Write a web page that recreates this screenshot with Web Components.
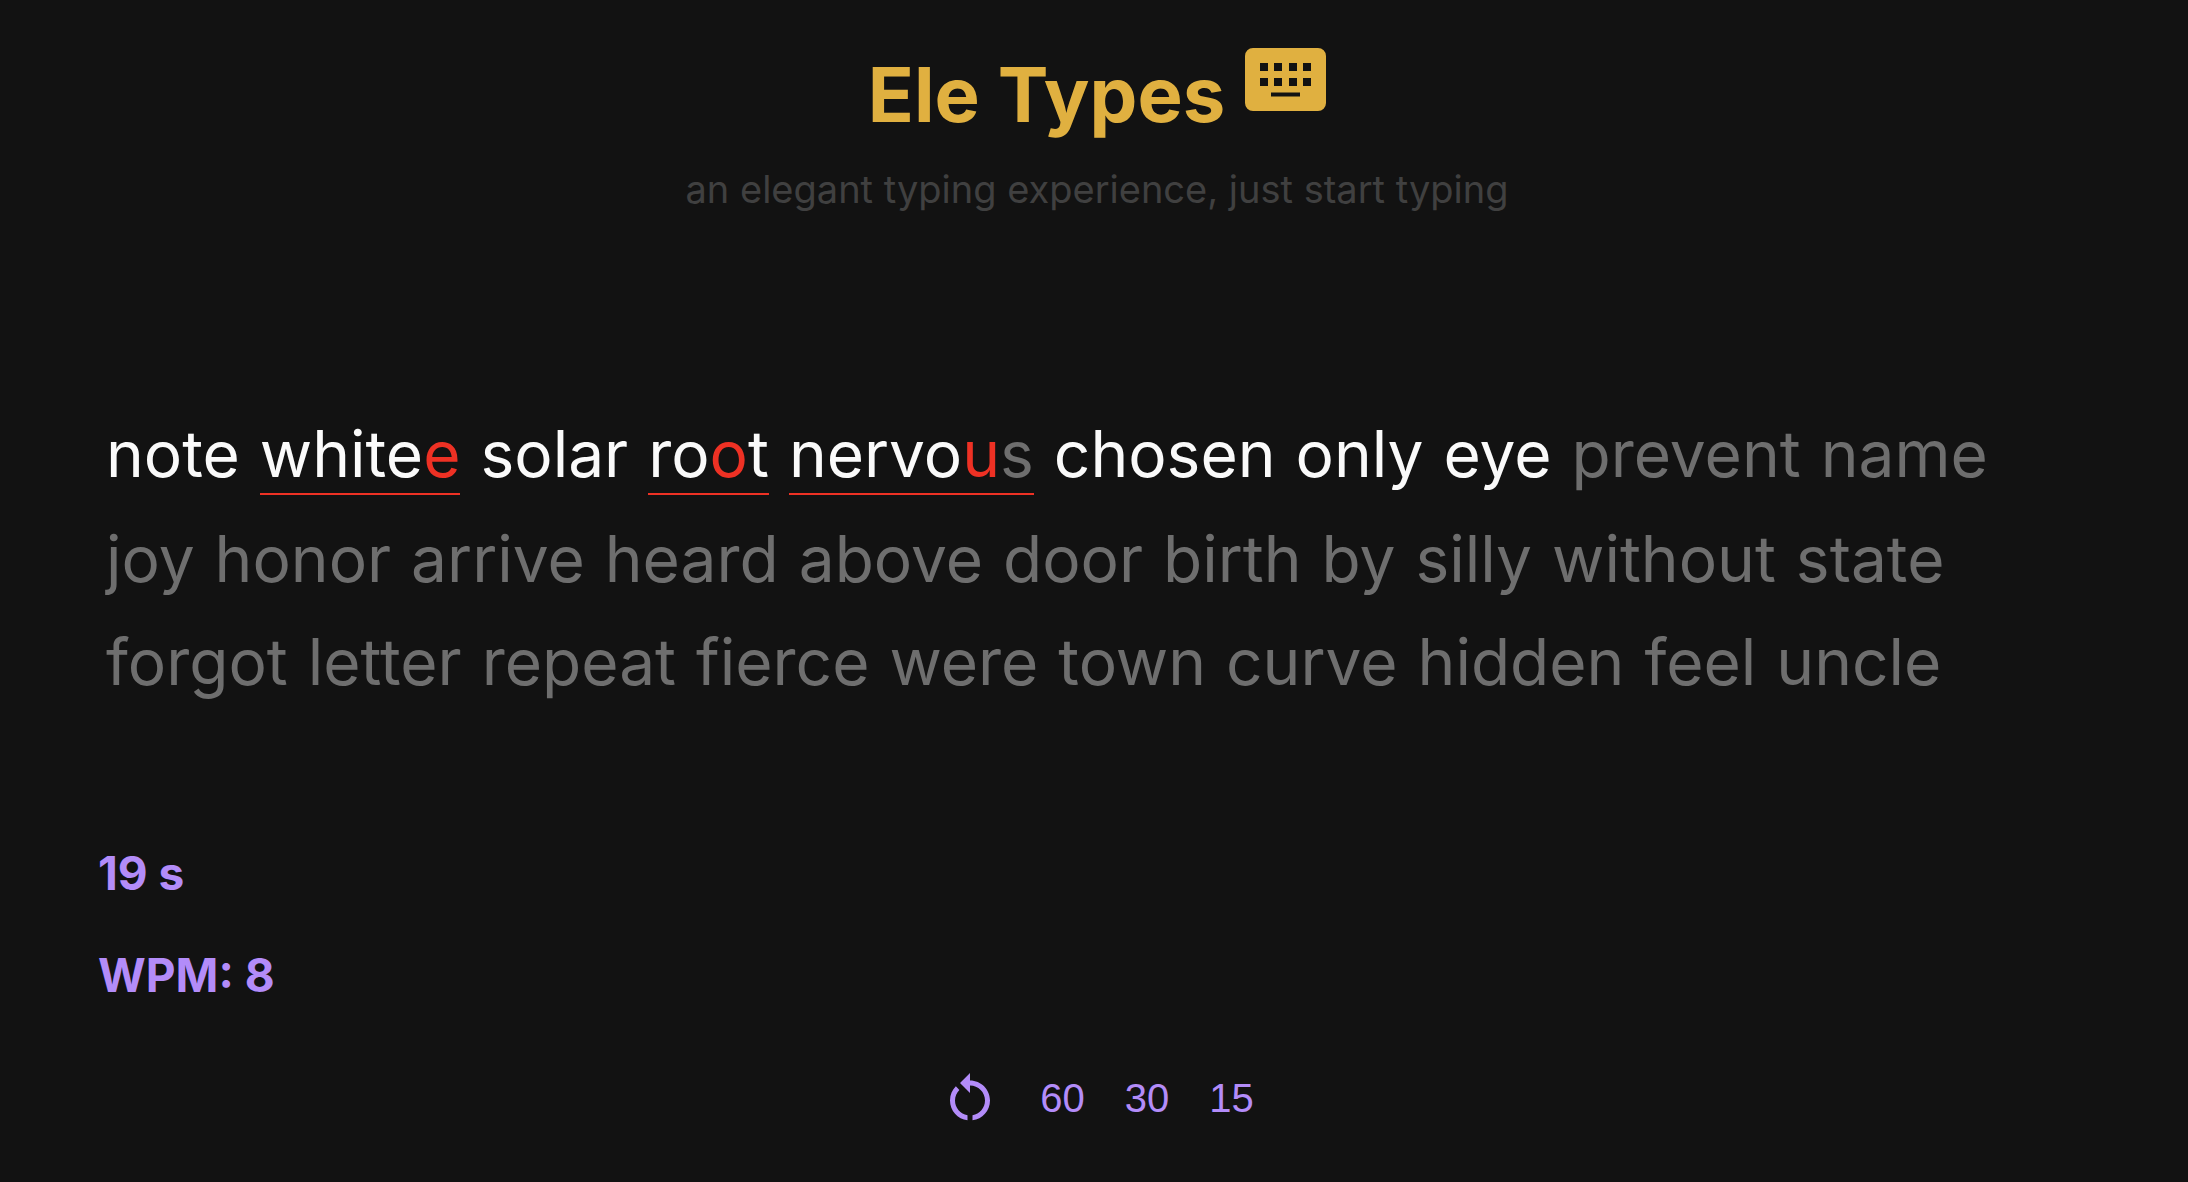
<!DOCTYPE html>
<html lang="en">
<head>
<meta charset="utf-8">
<title>Ele Types</title>
<style>
html, body { margin: 0; min-height: 100%; background: #121212; }
body { font-family: Inter, "Liberation Sans", sans-serif; }
</style>
</head>
<body>
<type-app></type-app>

<template id="tpl-app">
<style>
:host { display: flex; flex-direction: column; box-sizing: border-box; min-height: 100vh; padding: 40px 92px 40px 98px; }
type-words { margin-top: 188px; }
type-stats { margin-top: 132px; }
type-controls { margin-top: 65px; }
</style>
<type-header heading="Ele Types">an elegant typing experience, just start typing</type-header>
<type-words></type-words>
<type-stats seconds="19" wpm="8"></type-stats>
<type-controls></type-controls>
</template>

<template id="tpl-header">
<style>
:host { display: flex; flex-direction: column; align-items: center; }
h1 { display: flex; gap: 20px; align-items: flex-start; margin: 0; font-size: 76px; line-height: 108px; font-weight: 700; color: #e0b040; }
svg { width: 81px; height: 63px; margin-top: 8px; }
p { margin: 16px 0 0; font-size: 38px; line-height: 50px; color: #404040; }
</style>
<h1><span></span><svg viewBox="0 0 81 63" fill="currentColor" aria-hidden="true"><path fill-rule="evenodd" d="M8 0H73a8 8 0 0 1 8 8V55a8 8 0 0 1-8 8H8a8 8 0 0 1-8-8V8a8 8 0 0 1 8-8zM15 15v8h8v-8zM29 15v8h8v-8zM44 15v8h8v-8zM58 15v8h8v-8zM15 30v8h8v-8zM29 30v8h8v-8zM44 30v8h8v-8zM58 30v8h8v-8zM26 44.500v4h29v-4z"/></svg></h1>
<p><slot></slot></p>
</template>

<template id="tpl-words">
<style>
:host { display: flex; flex-wrap: wrap; column-gap: 20px; padding: 0 8px; }
</style>
</template>

<template id="tpl-word">
<style>
:host { display: block; margin: 12px 0; box-sizing: border-box; font-size: 64px; line-height: 79px; color: #6e6e6e; white-space: nowrap; }
:host([state="wrong"]) { border-bottom: 2px solid #ee3124; }
.ok { color: #fafafa; }
.bad { color: #ee3124; }
</style>
</template>

<template id="tpl-stats">
<style>
:host { display: flex; flex-direction: column; gap: 46px; color: #b38cf9; }
h3 { margin: 0; font-size: 46px; line-height: 56px; font-weight: 700; }
</style>
<h3 class="time"></h3>
<h3 class="wpm"></h3>
</template>

<template id="tpl-controls">
<style>
:host { display: flex; justify-content: center; align-items: center; gap: 40px; color: #b38cf9; }
button { display: block; margin: 0; padding: 0; border: 0; background: none; color: inherit; font: 40px/48px "Liberation Sans", Arial, sans-serif; cursor: pointer; }
svg { display: block; width: 60px; height: 60px; }
</style>
<button aria-label="Restart"><svg viewBox="0 0 24 24" fill="currentColor" aria-hidden="true"><path d="M12 5V2L8 6l4 4V7c3.310 0 6 2.690 6 6 0 2.970-2.170 5.430-5 5.910v2.020c3.950-.49 7-3.850 7-7.930 0-4.420-3.580-8-8-8zM6 13c0-1.650.67-3.150 1.760-4.240L6.340 7.340C4.900 8.790 4 10.790 4 13c0 4.080 3.050 7.440 7 7.930v-2.020c-2.830-.48-5-2.940-5-5.910z"/></svg></button>
<button>60</button><button>30</button><button>15</button>
</template>

<script>
const stamp = (el, id) => {
  const root = el.attachShadow({ mode: "open" });
  root.append(document.getElementById(id).content.cloneNode(true));
  return root;
};

class TypeHeader extends HTMLElement {
  connectedCallback() {
    stamp(this, "tpl-header").querySelector("span").textContent = this.getAttribute("heading");
  }
}

// Splits a word into runs of correct, mistyped and pending letters.
class TypeWord extends HTMLElement {
  connectedCallback() {
    const root = stamp(this, "tpl-word");
    const word = this.getAttribute("word");
    const typed = this.getAttribute("typed") || "";
    const runs = [];
    [...word.padEnd(typed.length, " ")].forEach((ch, i) => {
      const kind = i >= typed.length ? "" : typed[i] === ch ? "ok" : "bad";
      const letter = i < word.length ? ch : typed[i];
      const last = runs[runs.length - 1];
      if (last && last.kind === kind) last.text += letter;
      else runs.push({ kind, text: letter });
    });
    for (const { kind, text } of runs) {
      const span = document.createElement("span");
      span.className = kind;
      span.textContent = text;
      root.append(span);
    }
    if (typed && typed !== word) this.setAttribute("state", "wrong");
  }
}

class TypeWords extends HTMLElement {
  connectedCallback() {
    const root = stamp(this, "tpl-words");
    const typed = ["note", "whitee", "solar", "rowt", "nervoi", "chosen", "only", "eye"];
    const words = ("note white solar root nervous chosen only eye prevent name " +
      "joy honor arrive heard above door birth by silly without state " +
      "forgot letter repeat fierce were town curve hidden feel uncle").split(" ");
    words.forEach((word, i) => {
      const el = document.createElement("type-word");
      el.setAttribute("word", word);
      if (typed[i]) el.setAttribute("typed", typed[i]);
      root.append(el);
    });
  }
}

class TypeStats extends HTMLElement {
  connectedCallback() {
    const root = stamp(this, "tpl-stats");
    root.querySelector(".time").textContent = this.getAttribute("seconds") + " s";
    root.querySelector(".wpm").textContent = "WPM: " + this.getAttribute("wpm");
  }
}

class TypeControls extends HTMLElement {
  connectedCallback() { stamp(this, "tpl-controls"); }
}

class TypeApp extends HTMLElement {
  connectedCallback() { stamp(this, "tpl-app"); }
}

customElements.define("type-header", TypeHeader);
customElements.define("type-word", TypeWord);
customElements.define("type-words", TypeWords);
customElements.define("type-stats", TypeStats);
customElements.define("type-controls", TypeControls);
customElements.define("type-app", TypeApp);
</script>
</body>
</html>
